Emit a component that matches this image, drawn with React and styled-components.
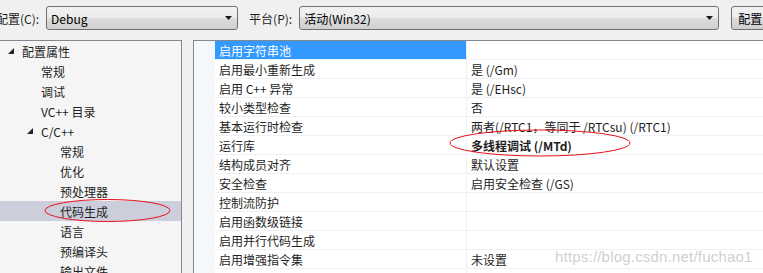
import styled, { createGlobalStyle } from 'styled-components';

const GlobalStyle = createGlobalStyle`
  html, body {
    margin: 0;
    padding: 0;
    background: #f0f0f0;
    overflow: hidden;
  }
  body {
    font-family: "Noto Sans CJK SC", "Noto Sans", sans-serif;
    font-size: 12px;
    color: #1e1e1e;
  }
`;

const treeItems = [
  { label: '配置属性', level: 0, open: true },
  { label: '常规', level: 1 },
  { label: '调试', level: 1 },
  { label: 'VC++ 目录', level: 1 },
  { label: 'C/C++', level: 1, open: true },
  { label: '常规', level: 2 },
  { label: '优化', level: 2 },
  { label: '预处理器', level: 2 },
  { label: '代码生成', level: 2, selected: true },
  { label: '语言', level: 2 },
  { label: '预编译头', level: 2 },
  { label: '输出文件', level: 2 },
];

const props = [
  { name: '启用字符串池', value: '', selected: true },
  { name: '启用最小重新生成', value: '是 (/Gm)' },
  { name: '启用 C++ 异常', value: '是 (/EHsc)' },
  { name: '较小类型检查', value: '否' },
  { name: '基本运行时检查', value: '两者(/RTC1，等同于 /RTCsu) (/RTC1)' },
  { name: '运行库', value: '多线程调试 (/MTd)', bold: true },
  { name: '结构成员对齐', value: '默认设置' },
  { name: '安全检查', value: '启用安全检查 (/GS)' },
  { name: '控制流防护', value: '' },
  { name: '启用函数级链接', value: '' },
  { name: '启用并行代码生成', value: '' },
  { name: '启用增强指令集', value: '未设置' },
  { name: '', value: '' },
];

const DropArrow = () => (
  <svg width="7" height="4" viewBox="0 0 7 4">
    <path d="M0 0 H7 L3.5 4 Z" fill="#1a1a1a" />
  </svg>
);

const Expander = () => (
  <svg width="6" height="6" viewBox="0 0 6 6">
    <path d="M6 0 V6 H0 Z" fill="#262626" />
  </svg>
);

const App = () => (
  <Page>
    <GlobalStyle />
    <Toolbar>
      <Label>配置(C):</Label>
      <Combo $width={192}>
        <span>Debug</span>
        <DropArrow />
      </Combo>
      <Label $gap={11}>平台(P):</Label>
      <Combo $width={420}>
        <span>活动(Win32)</span>
        <DropArrow />
      </Combo>
      <ToolButton>配置管理器(O)...</ToolButton>
    </Toolbar>
    <Panels>
      <TreePanel>
        {treeItems.map((item, index) => (
          /* eslint-disable react/no-array-index-key */
          <TreeRow key={`${item.label}-${index}`} $level={item.level} $selected={item.selected}>
            <ExpanderSlot>{item.open && <Expander />}</ExpanderSlot>
            {item.label}
          </TreeRow>
        ))}
      </TreePanel>
      <GridPanel>
        <Gutter />
        <Grid>
          {props.map((row, index) => (
            <GridRow key={`${row.name}-${index}`}>
              <NameCell $selected={row.selected}>{row.name}</NameCell>
              <ValueCell $bold={row.bold}>{row.value}</ValueCell>
            </GridRow>
          ))}
        </Grid>
      </GridPanel>
    </Panels>
    <Marks width="763" height="273" viewBox="0 0 763 273">
      <ellipse cx="107.5" cy="210.5" rx="62.5" ry="11" fill="none" stroke="#e8111a" strokeWidth="1" />
      <ellipse cx="540" cy="143" rx="90" ry="13" fill="none" stroke="#e8111a" strokeWidth="1" />
    </Marks>
    <Watermark>https://blog.csdn.net/fuchao1</Watermark>
  </Page>
);

export default App;

const Page = styled.div`
  position: relative;
  width: 763px;
  height: 273px;
  overflow: hidden;
  background: #f0f0f0;
`;

const Toolbar = styled.div`
  display: flex;
  align-items: center;
  height: 36px;
  margin-left: -4px;
  white-space: nowrap;
`;

const Label = styled.span`
  margin-left: ${({ $gap }) => $gap || 0}px;
  margin-right: 7px;
  color: #1e1e1e;
`;

const Combo = styled.div`
  flex: none;
  box-sizing: border-box;
  display: flex;
  align-items: center;
  justify-content: space-between;
  width: ${({ $width }) => $width}px;
  height: 24px;
  padding: 0 5px 0 4px;
  border: 1px solid #707070;
  border-radius: 3px;
  background: linear-gradient(#f2f2f2 0%, #ebebeb 50%, #dddddd 50%, #cfcfcf 100%);
  color: #000;
`;

const ToolButton = styled(Combo)`
  width: 120px;
  margin-left: 12px;
  justify-content: flex-start;
  padding-left: 6px;
`;

const Panels = styled.div`
  display: flex;
  gap: 11px;
  margin-top: 4px;
  height: 233px;
`;

const TreePanel = styled.div`
  flex: none;
  box-sizing: border-box;
  width: 182px;
  border-top: 1px solid #828790;
  border-right: 1px solid #828790;
  background: #f5f5f5;
  overflow: hidden;
`;

const TreeRow = styled.div`
  flex: none;
  display: flex;
  align-items: center;
  height: 20px;
  padding-left: ${({ $level }) => 8 + $level * 19}px;
  background: ${({ $selected }) => ($selected ? '#cccedb' : 'transparent')};
  color: #1e1e1e;
  white-space: nowrap;
`;

const ExpanderSlot = styled.span`
  display: flex;
  align-items: center;
  width: 14px;
  height: 20px;
`;

const GridPanel = styled.div`
  flex: 1;
  display: flex;
  border-top: 1px solid #828790;
  border-left: 1px solid #828790;
  background: #ffffff;
  overflow: hidden;
`;

const Gutter = styled.div`
  flex: none;
  width: 21px;
  background: #f5f7fb;
`;

const Grid = styled.div`
  flex: 1;
  display: flex;
  flex-direction: column;
`;

const GridRow = styled.div`
  flex: none;
  display: grid;
  grid-template-columns: 252px 1fr;
  height: 19px;
  box-sizing: border-box;
  border-bottom: 1px solid #edf0f5;
`;

const NameCell = styled.div`
  display: flex;
  align-items: center;
  padding-left: 4px;
  border-right: 1px solid #edf0f5;
  background: ${({ $selected }) => ($selected ? '#3399ff' : '#ffffff')};
  color: ${({ $selected }) => ($selected ? '#ffffff' : '#1e1e1e')};
  white-space: nowrap;
`;

const ValueCell = styled.div`
  display: flex;
  align-items: center;
  padding-left: 4px;
  font-weight: ${({ $bold }) => ($bold ? 700 : 400)};
  color: #1e1e1e;
  white-space: nowrap;
`;

const Marks = styled.svg`
  position: absolute;
  left: 0;
  top: 0;
  pointer-events: none;
`;

const Watermark = styled.div`
  position: absolute;
  left: 555px;
  top: 248px;
  font-family: "Liberation Sans", Arial, sans-serif;
  font-size: 15px;
  color: rgba(190, 190, 190, 0.75);
  letter-spacing: 0.2px;
  pointer-events: none;
`;
